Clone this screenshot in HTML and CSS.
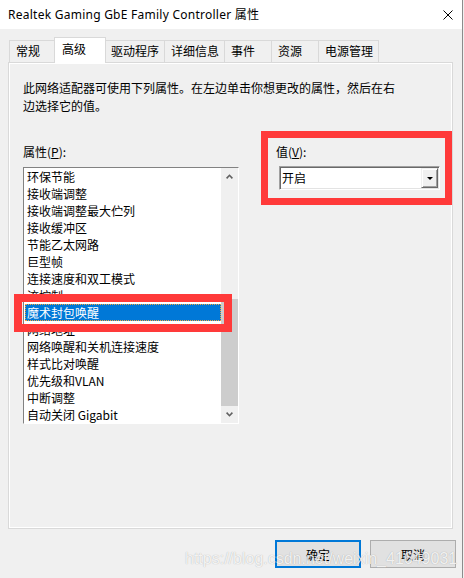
FILE: index.html
```html
<!DOCTYPE html>
<html lang="zh-CN">
<head>
<meta charset="utf-8">
<title>Realtek Gaming GbE Family Controller 属性</title>
<link rel="stylesheet" href="styles.css">
</head>
<body>
<div class="window">
  <header class="titlebar">
    <span class="title">Realtek Gaming GbE Family Controller 属性</span>
    <svg class="close" width="10" height="10" viewBox="0 0 10 10"><path d="M0.5 0.5 L9.5 9.5 M9.5 0.5 L0.5 9.5" stroke="#000" stroke-width="1" fill="none"/></svg>
  </header>
  <div class="body">
    <nav class="tabs">
      <div class="tab">常规</div>
      <div class="tab active">高级</div>
      <div class="tab">驱动程序</div>
      <div class="tab">详细信息</div>
      <div class="tab">事件</div>
      <div class="tab">资源</div>
      <div class="tab">电源管理</div>
    </nav>
    <section class="panel">
      <p class="desc">此网络适配器可使用下列属性。在左边单击你想更改的属性，然后在右边选择它的值。</p>
      <div class="columns">
        <div class="col-left">
          <div class="label">属性(<u>P</u>):</div>
          <div class="listbox">
            <ul class="items">
              <li>环保节能</li>
              <li>接收端调整</li>
              <li>接收端调整最大伫列</li>
              <li>接收缓冲区</li>
              <li>节能乙太网路</li>
              <li>巨型帧</li>
              <li>连接速度和双工模式</li>
              <li>流控制</li>
              <li class="selected">魔术封包唤醒</li>
              <li>网络地址</li>
              <li>网络唤醒和关机连接速度</li>
              <li>样式比对唤醒</li>
              <li>优先级和VLAN</li>
              <li>中断调整</li>
              <li>自动关闭 Gigabit</li>
            </ul>
            <div class="scrollbar">
              <div class="sb-arrow"><svg width="7" height="5" viewBox="0 0 7 5"><path d="M0.6 4.4 L3.5 1.3 L6.4 4.4" stroke="#606060" stroke-width="1.6" fill="none"/></svg></div>
              <div class="sb-space"></div>
              <div class="sb-thumb"></div>
              <div class="sb-arrow"><svg width="7" height="5" viewBox="0 0 7 5"><path d="M0.6 0.6 L3.5 3.7 L6.4 0.6" stroke="#606060" stroke-width="1.6" fill="none"/></svg></div>
            </div>
          </div>
        </div>
        <div class="col-right">
          <div class="label label-value">值(<u>V</u>):</div>
          <div class="combo">
            <span class="combo-text">开启</span>
            <span class="combo-btn"><svg width="6" height="3" viewBox="0 0 6 3"><polygon points="0,0 6,0 3,3" fill="#000"/></svg></span>
          </div>
        </div>
      </div>
      <div class="mark mark-list"></div>
      <div class="mark mark-value"></div>
    </section>
    <div class="buttons">
      <button class="btn btn-default">确定</button>
      <button class="btn">取消</button>
    </div>
  </div>
  <div class="watermark">https://blog.csdn.net/weixin_41649031</div>
</div>
</body>
</html>
```
FILE: styles.css
```css
* { box-sizing: border-box; }
html, body { margin: 0; padding: 0; }
body {
  background: #f0f0f0;
  font-family: "Noto Sans CJK SC", "Noto Sans", sans-serif;
  font-size: 12px;
  color: #000;
}
.window {
  position: relative;
  width: 463px;
  height: 578px;
  border-right: 1px solid #8c8c8c;
  background: #f0f0f0;
  overflow: hidden;
}
.titlebar {
  height: 29px;
  background: #fff;
  display: flex;
  align-items: center;
  justify-content: space-between;
  padding: 0 9px 0 8px;
}
.title {
  font-family: "Noto Sans", "Noto Sans CJK SC", sans-serif;
  font-size: 12px;
  line-height: 16px;
  letter-spacing: 0.25px;
  white-space: nowrap;
}
.close { display: block; margin-top: 1px; }

.body { padding: 8px 0 0 8px; }

.tabs {
  display: flex;
  align-items: flex-end;
  height: 25px;
  margin-left: 1px;
}
.tab {
  height: 22px;
  min-width: 48px;
  padding: 0 5px 0 6px;
  border: 1px solid #d9d9d9;
  border-bottom: none;
  margin-left: -1px;
  background: #f0f0f0;
  line-height: 20px;
  white-space: nowrap;
}
.tab:first-child { margin-left: 0; min-width: 47px; }
.tab.active {
  position: relative;
  z-index: 1;
  height: 26px;
  min-width: 52px;
  margin-left: -2px;
  margin-right: -1px;
  margin-bottom: -1px;
  padding: 0 5px 0 7px;
  line-height: 22px;
  background: #fff;
}

.panel {
  position: relative;
  width: 445px;
  height: 467px;
  border: 1px solid #d9d9d9;
  box-shadow: inset 0 0 0 1px #fff;
  padding: 16px 14px 0 14px;
}
.desc {
  margin: 0;
  width: 376px;
  line-height: 18px;
}
.columns {
  display: flex;
  margin-top: 28px;
}
.col-left { width: 216px; }
.col-right { margin-left: 37px; }
.label {
  height: 18px;
  line-height: 18px;
  margin-bottom: 6px;
}
.label-value { margin-bottom: 5px; }

.listbox {
  display: flex;
  width: 216px;
  height: 257px;
  border: 1px solid;
  border-color: #828282 #fff #fff #828282;
  background: #fff;
}
.items {
  list-style: none;
  margin: 0;
  padding: 0 0 0 1px;
  flex: 1;
  overflow: hidden;
}
.items li {
  height: 17px;
  line-height: 17px;
  padding-left: 2px;
  white-space: nowrap;
}
.items li.selected {
  background: #0078d7;
  color: #fff;
  outline: 1px dotted #f7a43a;
  outline-offset: -1px;
}
.scrollbar {
  width: 17px;
  display: flex;
  flex-direction: column;
  background: #f0f0f0;
}
.sb-arrow {
  height: 17px;
  display: flex;
  align-items: center;
  justify-content: center;
}
.sb-space { flex: 1; }
.sb-thumb { height: 107px; background: #cdcdcd; }

.combo {
  display: flex;
  align-items: center;
  width: 161px;
  height: 24px;
  margin-left: 3px;
  border: 1px solid;
  border-color: #a0a0a0 #fff #fff #a0a0a0;
  box-shadow: inset 1px 1px 0 #696969, inset -1px -1px 0 #e3e3e3;
  background: #fff;
}
.combo-text {
  flex: 1;
  padding-left: 2px;
  line-height: 20px;
}
.combo-btn {
  width: 17px;
  height: 20px;
  margin-right: 1px;
  display: flex;
  align-items: center;
  justify-content: center;
  background: #f0f0f0;
  border: 1px solid;
  border-color: #f0f0f0 #696969 #696969 #f0f0f0;
  box-shadow: inset 1px 1px 0 #fff, inset -1px -1px 0 #a0a0a0;
}
.combo-btn svg { display: block; }

.mark {
  position: absolute;
  border: 7px solid #ff3a3a;
}
.mark-list {
  left: 5px;
  top: 231px;
  width: 218px;
  height: 38px;
  border-width: 8px;
}
.mark-value {
  left: 252px;
  top: 68px;
  width: 191px;
  height: 74px;
}

.buttons {
  display: flex;
  justify-content: flex-end;
  gap: 9px;
  margin-top: 11px;
  padding-right: 6px;
}
.btn {
  width: 86px;
  height: 28px;
  padding: 0;
  background: #e1e1e1;
  border: 1px solid #adadad;
  font-family: "Noto Sans CJK SC", sans-serif;
  font-size: 12px;
  color: #000;
}
.btn-default { border: 2px solid #0078d7; }

.watermark {
  position: absolute;
  left: 185px;
  top: 550px;
  font-family: "Liberation Sans", Arial, sans-serif;
  font-size: 16px;
  line-height: 18px;
  color: rgba(255, 255, 255, 0.85);
  text-shadow: 0 0 1px rgba(0, 0, 0, 0.3);
  white-space: nowrap;
  pointer-events: none;
}
```
